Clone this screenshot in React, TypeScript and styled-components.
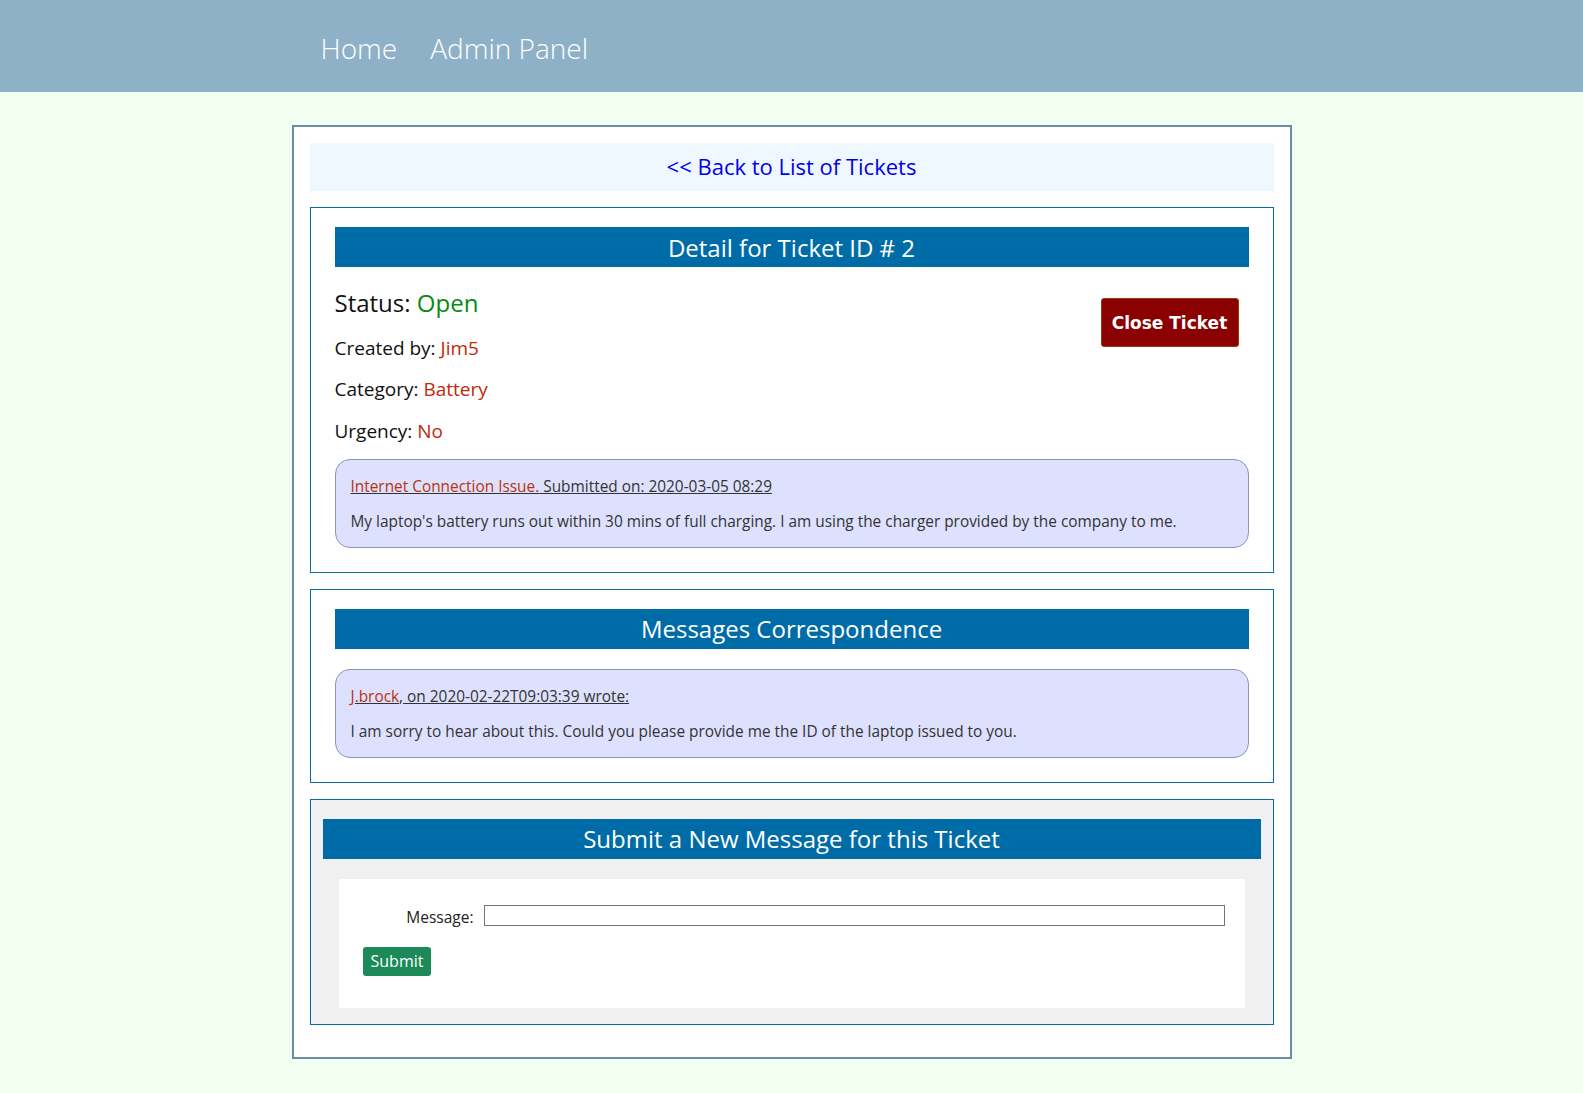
import React from 'react';
import styled, { createGlobalStyle } from 'styled-components';

const GlobalStyle = createGlobalStyle`
  html, body {
    margin: 0;
    padding: 0;
    background: #f0fff0;
    font-family: "Open Sans", "Noto Sans", sans-serif;
    color: #111;
  }
`;

// --- Top navigation ---
const NavBar = styled.header`
  height: 92px;
  background: #8fb1c8;
`;

const NavInner = styled.nav`
  width: 1000px;
  height: 100%;
  margin: 0 auto;
  padding-left: 29px;
  box-sizing: border-box;
  display: flex;
  align-items: center;
  gap: 33px;
`;

const NavLink = styled.a`
  color: #fff;
  font-size: 28px;
  font-weight: 300;
  text-decoration: none;
  margin-top: 4px;
`;

// --- Page container ---
const Container = styled.main`
  width: 1000px;
  box-sizing: border-box;
  margin: 33px auto 32px;
  padding: 16px;
  background: #fff;
  border: 2px solid #6d8ba6;
`;

const BackBar = styled.div`
  background: #f0f8ff;
  height: 48px;
  display: flex;
  align-items: center;
  justify-content: center;
  margin-bottom: 16px;
`;

const BackLink = styled.a`
  color: #0000ee;
  font-size: 22px;
  text-decoration: none;
  margin-top: -3px;
`;

const Section = styled.section<{ $grey?: boolean }>`
  border: 1px solid #0a6aa6;
  background: ${p => (p.$grey ? '#f0f0f0' : '#fff')};
  padding: ${p => (p.$grey ? '19px 12px 16px' : '19px 24px 24px')};
  margin-bottom: 16px;
`;

const SectionTitle = styled.h2`
  margin: 0;
  height: 40px;
  background: #006ca7;
  color: #fff;
  font-size: 24px;
  font-weight: 400;
  display: flex;
  align-items: center;
  justify-content: center;
`;

// --- Ticket details ---
const DetailRow = styled.div`
  display: flex;
  justify-content: space-between;
  align-items: flex-start;
`;

const InfoList = styled.div`
  display: flex;
  flex-direction: column;
`;

const StatusLine = styled.div`
  font-size: 24px;
  line-height: 34px;
  margin-top: 19px;
`;

const InfoLine = styled.div`
  font-size: 19px;
  line-height: 28px;
  margin-top: 13.5px;
`;

const Value = styled.span<{ $color: string }>`
  color: ${p => p.$color};
`;

const CloseButton = styled.button`
  margin: 31px 10px 0 0;
  width: 138px;
  height: 49px;
  background: #8b0000;
  color: #fff;
  border: 1px solid #9b3a10;
  border-radius: 3px;
  font-family: "DejaVu Sans", "Open Sans", sans-serif;
  font-weight: 700;
  font-size: 17px;
  cursor: pointer;
`;

const Bubble = styled.div<{ $top: number }>`
  margin-top: ${p => p.$top}px;
  background: #dee1fe;
  border: 1px solid #8d94b4;
  border-radius: 15px;
  padding: 15px 15px 13px;
  font-size: 15.4px;
  color: #333;
`;

const BubbleHead = styled.div`
  line-height: 24px;
  text-decoration: underline;
`;

const Accent = styled.span`
  color: #b8330c;
`;

const BubbleText = styled.p`
  margin: 11px 0 0;
  line-height: 24px;
`;

// --- New message form ---
const FormCard = styled.form`
  margin: 20px 16px 0;
  background: #fff;
  padding: 26px 20px 32px 24px;
`;

const FieldRow = styled.div`
  display: flex;
  align-items: center;
  gap: 10px;
  height: 21px;
`;

const Label = styled.label`
  width: 111px;
  text-align: right;
  font-size: 15.5px;
  color: #222;
  margin-top: 3px;
`;

const TextInput = styled.input`
  flex: 1;
  height: 21px;
  box-sizing: border-box;
  border: 1px solid #767676;
  padding: 0 4px;
  margin: 0;
  font-family: inherit;
`;

const SubmitButton = styled.button`
  margin-top: 21px;
  height: 29px;
  padding: 0 8px;
  background: #1b8a58;
  color: #fff;
  border: none;
  border-radius: 3px;
  font-family: "Open Sans", sans-serif;
  font-size: 16px;
  cursor: pointer;
`;

export default function App() {
  return (
    <>
      <GlobalStyle />
      <NavBar>
        <NavInner>
          <NavLink href="#">Home</NavLink>
          <NavLink href="#">Admin Panel</NavLink>
        </NavInner>
      </NavBar>

      <Container>
        <BackBar>
          <BackLink href="#">&lt;&lt; Back to List of Tickets</BackLink>
        </BackBar>

        <Section>
          <SectionTitle>Detail for Ticket ID # 2</SectionTitle>
          <DetailRow>
            <InfoList>
              <StatusLine>
                Status: <Value $color="#0a8a14">Open</Value>
              </StatusLine>
              <InfoLine>
                Created by: <Value $color="#c0290a">Jim5</Value>
              </InfoLine>
              <InfoLine>
                Category: <Value $color="#c0290a">Battery</Value>
              </InfoLine>
              <InfoLine>
                Urgency: <Value $color="#c0290a">No</Value>
              </InfoLine>
            </InfoList>
            <CloseButton type="button">Close Ticket</CloseButton>
          </DetailRow>
          <Bubble $top={14}>
            <BubbleHead>
              <Accent>Internet Connection Issue.</Accent> Submitted on: 2020-03-05 08:29
            </BubbleHead>
            <BubbleText>
              My laptop's battery runs out within 30 mins of full charging. I am using the charger provided by the company to me.
            </BubbleText>
          </Bubble>
        </Section>

        <Section>
          <SectionTitle>Messages Correspondence</SectionTitle>
          <Bubble $top={20}>
            <BubbleHead>
              <Accent>J.brock</Accent>, on 2020-02-22T09:03:39 wrote:
            </BubbleHead>
            <BubbleText>
              I am sorry to hear about this. Could you please provide me the ID of the laptop issued to you.
            </BubbleText>
          </Bubble>
        </Section>

        <Section $grey>
          <SectionTitle>Submit a New Message for this Ticket</SectionTitle>
          <FormCard onSubmit={e => e.preventDefault()}>
            <FieldRow>
              <Label htmlFor="msg">Message:</Label>
              <TextInput id="msg" type="text" />
            </FieldRow>
            <SubmitButton type="submit">Submit</SubmitButton>
          </FormCard>
        </Section>
      </Container>
    </>
  );
}
